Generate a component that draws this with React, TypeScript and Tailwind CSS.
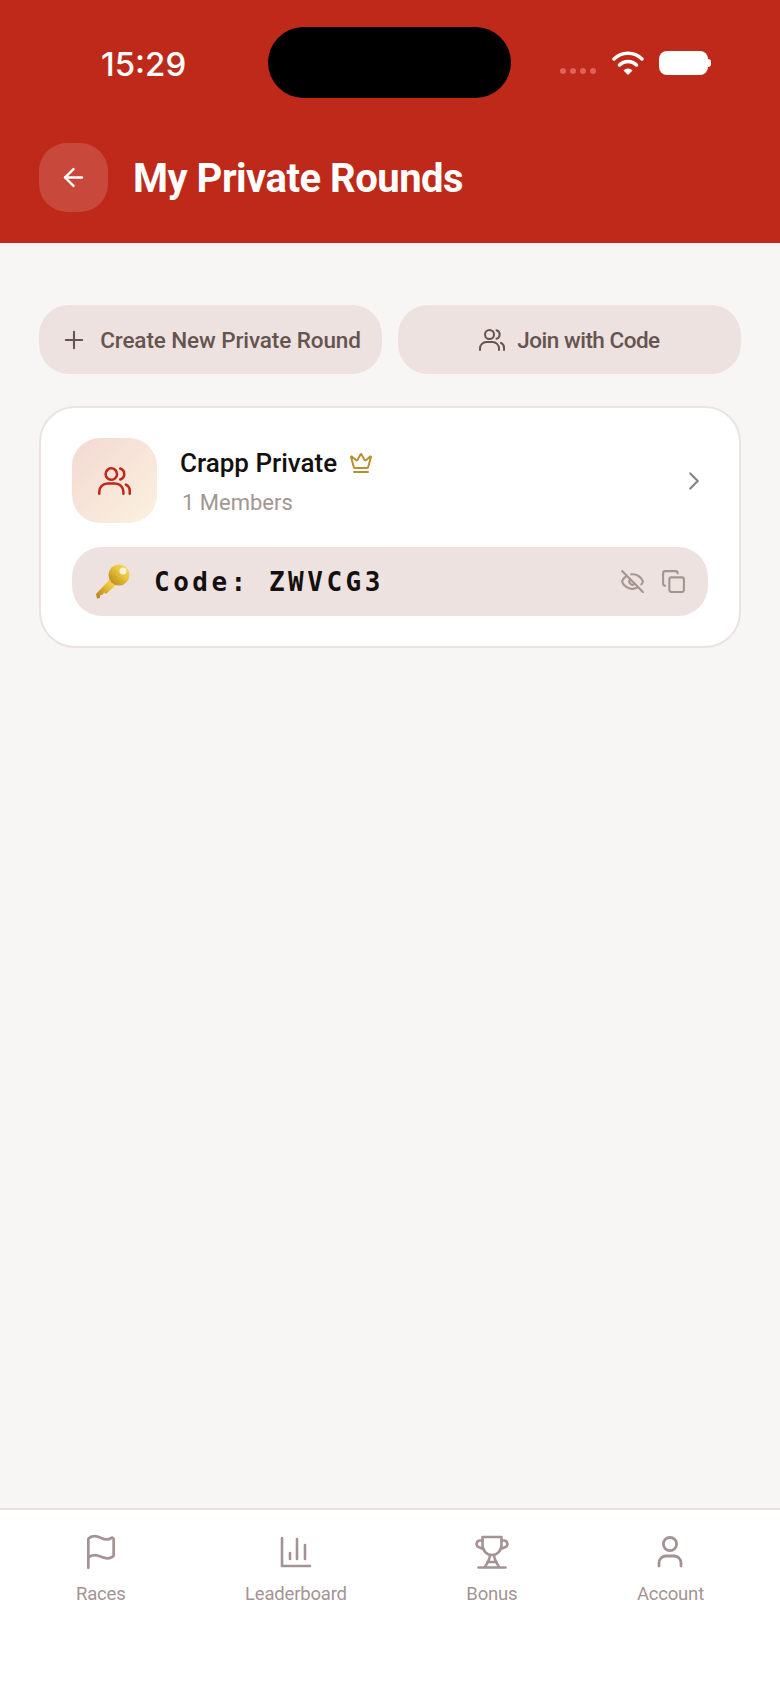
import React from 'react';
import { ArrowLeft, Plus, ChevronRight, EyeOff, Copy, Crown, Flag } from 'lucide-react';

const PairIcon = ({ className }: { className?: string }) => (
  <svg viewBox="0 0 26 22" fill="none" stroke="currentColor" strokeWidth="2" strokeLinecap="round" className={className}>
    <circle cx="10.500" cy="5.500" r="4.500" />
    <path d="M1 21v-1.500A6.500 6.500 0 0 1 7.500 13h6a6.500 6.500 0 0 1 6.500 6.500V21" />
    <path d="M17.500 1.200a4.500 4.500 0 0 1 0 8.600" />
    <path d="M22 13.800a5.500 5.500 0 0 1 3 5V21" />
  </svg>
);

const BarsIcon = ({ className }: { className?: string }) => (
  <svg viewBox="0 0 32 32" fill="none" stroke="currentColor" strokeWidth="2.600" strokeLinecap="round" strokeLinejoin="round" className={className}>
    <path d="M2 2v28h28" />
    <path d="M10 23v-6" />
    <path d="M17 23V3" />
    <path d="M25 23V9" />
  </svg>
);

const PersonIcon = ({ className }: { className?: string }) => (
  <svg viewBox="0 0 26 32" fill="none" stroke="currentColor" strokeWidth="2.800" strokeLinecap="round" className={className}>
    <circle cx="13" cy="8" r="6.600" />
    <path d="M2 30v-3a7 7 0 0 1 7-7h8a7 7 0 0 1 7 7v3" />
  </svg>
);

const TrophyIcon = ({ className }: { className?: string }) => (
  <svg viewBox="0 0 34 34" fill="none" stroke="currentColor" strokeWidth="2.600" strokeLinecap="round" strokeLinejoin="round" className={className}>
    <path d="M7.500 2h19v8c0 5.500-4.300 10-9.500 10s-9.500-4.500-9.500-10z" />
    <path d="M7.500 5.500H5a3.500 3.500 0 0 0-1 6.800l4.500 1.700" />
    <path d="M26.500 5.500H29a3.500 3.500 0 0 1 1 6.800L25.500 14" />
    <path d="M15 20c0 4-2 7-5 12" />
    <path d="M19 20c0 4 2 7 5 12" />
    <path d="M3.500 32.500h27" />
    <path d="M12.500 27h9" />
  </svg>
);

const KeyIcon = () => (
  <svg viewBox="0 0 36 36" className="w-[36px] h-[36px]">
    <defs>
      <linearGradient id="keyGold" x1="0" y1="1" x2="1" y2="0">
        <stop offset="0" stopColor="#b07f14" />
        <stop offset="0.6" stopColor="#ecc53c" />
        <stop offset="1" stopColor="#f7dc6a" />
      </linearGradient>
    </defs>
    <path d="M1 30 L17 13 L23 19 L11 30 L9 28.500 L7.500 31 L5.500 30.500 L5 34 L2 34.500 Z" fill="url(#keyGold)" />
    <circle cx="24" cy="11" r="10.500" fill="url(#keyGold)" />
    <circle cx="28" cy="7" r="3.500" fill="#f8f1dc" />
  </svg>
);

const WifiIcon = () => (
  <svg viewBox="0 0 32 24" className="w-[32px] h-[24px]" fill="none" stroke="white" strokeWidth="3.400" strokeLinecap="round">
    <path d="M2 8a20 20 0 0 1 28 0" />
    <path d="M7.500 14a12 12 0 0 1 17 0" />
    <path d="M16 24l-4.500-4.500a6 6 0 0 1 9 0z" fill="white" stroke="none" />
  </svg>
);

const tabs = [
  { label: 'Races', icon: <Flag className="w-[38px] h-[38px]" strokeWidth={1.700} /> },
  { label: 'Leaderboard', icon: <BarsIcon className="w-[32px] h-[32px]" /> },
  { label: 'Bonus', icon: <TrophyIcon className="w-[34px] h-[34px]" /> },
  { label: 'Account', icon: <PersonIcon className="w-[26px] h-[32px]" /> },
];

const App: React.FC = () => {
  return (
    <div className="w-[780px] h-[1688px] flex flex-col bg-[#f8f6f4] font-['Roboto',sans-serif] overflow-hidden">
      {/* Header */}
      <header className="h-[243px] bg-[#bf2919] flex flex-col shrink-0">
        <div className="h-[143px] pt-[27px] flex">
          <div className="w-[268px] pl-[101px] pt-[16px] font-['Inter',sans-serif] font-medium text-[33px] leading-[42px] text-white">15:29</div>
          <div className="w-[243px] h-[71px] rounded-[36px] bg-black" />
          <div className="pl-[49px] pt-[24px] flex items-start">
            <div className="flex gap-[4px] mt-[17px]">
              <span className="w-[6px] h-[6px] rounded-full bg-[#dc6257]" />
              <span className="w-[6px] h-[6px] rounded-full bg-[#dc6257]" />
              <span className="w-[6px] h-[6px] rounded-full bg-[#dc6257]" />
              <span className="w-[6px] h-[6px] rounded-full bg-[#dc6257]" />
            </div>
            <div className="ml-[16px]">
              <WifiIcon />
            </div>
            <div className="ml-[15px] flex items-center">
              <div className="w-[49px] h-[24px] rounded-[8px] bg-white" />
              <div className="w-[3px] h-[8px] bg-white rounded-r-full" />
            </div>
          </div>
        </div>
        <div className="px-[39px] flex items-center gap-[25px]">
          <button className="w-[69px] h-[69px] rounded-[28px] bg-white/15 flex items-center justify-center text-white">
            <ArrowLeft className="w-[29px] h-[29px]" strokeWidth={2} />
          </button>
          <h1 className="pt-[2px] text-[40px] font-bold tracking-[-0.5px] leading-[48px] text-white">My Private Rounds</h1>
        </div>
      </header>

      {/* Content */}
      <main className="flex-1 px-[39px] pt-[62px]">
        <div className="grid grid-cols-2 gap-[16px]">
          <button className="h-[69px] rounded-[30px] bg-[#ede2e0] text-[#65544f] flex items-center justify-center gap-[12px] text-[22.500px] font-medium tracking-[-0.100px]">
            <Plus className="w-[28px] h-[28px]" strokeWidth={1.800} />
            <span className="pt-[3px]">Create New Private Round</span>
          </button>
          <button className="h-[69px] rounded-[30px] bg-[#ede2e0] text-[#65544f] flex items-center justify-center gap-[12px] text-[22.500px] font-medium tracking-[-0.500px]">
            <PairIcon className="w-[26px] h-[22px]" />
            <span className="pt-[3px]">Join with Code</span>
          </button>
        </div>

        <div className="mt-[32px] h-[242px] rounded-[36px] bg-white border-2 border-[#ebe3df] px-[31px] pt-[30px]">
          <div className="flex items-center">
            <div className="w-[85px] h-[85px] rounded-[28px] bg-linear-to-br from-[#f3d9d2] to-[#fbf1df] flex items-center justify-center text-[#bf2919]">
              <PairIcon className="w-[33px] h-[28px]" />
            </div>
            <div className="ml-[23px] pt-[3px] flex-1">
              <div className="flex items-center gap-[12px]">
                <span className="text-[26px] leading-[34px] font-medium text-[#14100e]">Crapp Private</span>
                <Crown className="w-[24px] h-[24px] text-[#b8912f]" strokeWidth={2} />
              </div>
              <div className="mt-[8px] ml-[2px] text-[22px] leading-[30px] text-[#a39591]">1 Members</div>
            </div>
            <ChevronRight className="w-[30px] h-[30px] text-[#8f8286] -mr-[1px]" strokeWidth={1.800} />
          </div>
          <div className="mt-[24px] h-[69px] rounded-[30px] bg-[#ede2e0] flex items-center pl-[23px] pr-[22px]">
            <KeyIcon />
            <span className="ml-[23px] pt-[1px] flex-1 font-['DejaVu_Sans_Mono',monospace] font-bold text-[26px] tracking-[3.500px] text-[#14100e]">Code: ZWVCG3</span>
            <EyeOff className="w-[25px] h-[25px] text-[#a39591]" strokeWidth={2} />
            <Copy className="ml-[16px] w-[25px] h-[25px] text-[#a39591]" strokeWidth={2} />
          </div>
        </div>
      </main>

      {/* Tab bar */}
      <nav className="h-[180px] shrink-0 bg-white border-t-2 border-[#e8e0de] pt-[24px] px-[76px] flex justify-between text-[#a39394]">
        {tabs.map((tab) => (
          <div key={tab.label} className="flex flex-col items-center">
            <div className="h-[36px] flex items-center justify-center">{tab.icon}</div>
            <div className="mt-[10px] text-[18.500px] tracking-[-0.200px] leading-[28px]">{tab.label}</div>
          </div>
        ))}
      </nav>
    </div>
  );
};

export default App;
